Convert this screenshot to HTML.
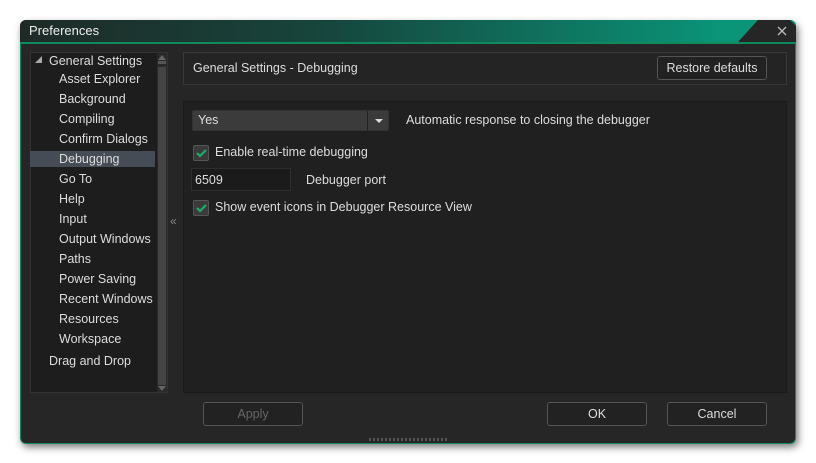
<!DOCTYPE html><html><head><style>
body{margin:0;width:816px;height:463px;background:#fff;position:relative;overflow:hidden;font-family:"Liberation Sans",sans-serif;font-size:12.5px;color:#ddd}
.a{position:absolute}
.win{left:20px;top:20px;width:776px;height:423px;background:#262626;border-radius:6px;box-shadow:2px 4px 8px rgba(0,0,0,.55)}
.title{left:20px;top:20px;width:776px;height:22px;border-radius:6px 6px 0 0;background:linear-gradient(90deg,#1f2a27 0%,#16463d 40%,#0a9478 90%)}
.body{left:20px;top:42px;width:774px;height:399px;border:1px solid #0f8a5c;border-top:2px solid #0f8a5c;border-radius:0 0 6px 6px;background:#262626}
.it{position:absolute;left:59px;height:20px;line-height:20px}
.btn{position:absolute;height:22px;border:1px solid #555;border-radius:3px;background:#222;text-align:center;line-height:22px}
.cb{position:absolute;width:14px;height:14px;background:#3a3a3a;border:1px solid #555;border-radius:2px}
</style></head><body>
<div class="a win"></div>
<div class="a title"></div>
<svg class="a" style="left:738px;top:20px" width="58" height="22"><polygon points="20,0 52,0 58,6 58,22 0,22" fill="#262626"/><path d="M40 7l8 8M48 7l-8 8" stroke="#bbb" stroke-width="1.3"/></svg>
<div class="a" style="left:29px;top:23px;color:#eee;font-size:13px">Preferences</div>
<div class="a body"></div>
<div class="a" style="left:30px;top:52px;width:138px;height:341px;background:#1d1d1d;border:1px solid #333;box-sizing:border-box"></div>
<div class="a" style="left:157px;top:53px;width:10px;height:339px;background:#2a2a2a"></div>
<div class="a" style="left:158px;top:67px;width:8px;height:318px;background:#444"></div>
<div class="a" style="left:158px;top:61px;width:8px;height:3px;background:#555"></div>
<div class="a" style="left:158px;top:55px;width:0;height:0;border-left:4px solid transparent;border-right:4px solid transparent;border-bottom:5px solid #666"></div>
<div class="a" style="left:158px;top:386px;width:0;height:0;border-left:4px solid transparent;border-right:4px solid transparent;border-top:5px solid #666"></div>
<div class="a" style="left:30px;top:151px;width:125px;height:16px;background:#464c55"></div>
<div class="a" style="left:35px;top:56px;width:0;height:0;border-left:7px solid transparent;border-bottom:7px solid #aaa"></div>
<div class="it" style="left:49px;top:51px">General Settings</div>
<div class="it" style="top:69px">Asset Explorer</div>
<div class="it" style="top:89px">Background</div>
<div class="it" style="top:109px">Compiling</div>
<div class="it" style="top:129px">Confirm Dialogs</div>
<div class="it" style="top:149px">Debugging</div>
<div class="it" style="top:169px">Go To</div>
<div class="it" style="top:189px">Help</div>
<div class="it" style="top:209px">Input</div>
<div class="it" style="top:229px">Output Windows</div>
<div class="it" style="top:249px">Paths</div>
<div class="it" style="top:269px">Power Saving</div>
<div class="it" style="top:289px">Recent Windows</div>
<div class="it" style="top:309px">Resources</div>
<div class="it" style="top:329px">Workspace</div>
<div class="it" style="left:49px;top:351px">Drag and Drop</div>
<div class="a" style="left:170px;top:214px;color:#888;font-size:12px">«</div>
<div class="a" style="left:183px;top:52px;width:604px;height:33px;border:1px solid #383838;box-sizing:border-box;background:#242424"></div>
<div class="a" style="left:193px;top:61px">General Settings - Debugging</div>
<div class="btn" style="left:657px;top:56px;width:108px;height:22px;border-color:#555">Restore defaults</div>
<div class="a" style="left:183px;top:101px;width:604px;height:292px;border:1px solid #1a1a1a;box-sizing:border-box;background:#202020"></div>
<div class="a" style="left:192px;top:110px;width:197px;height:21px;background:#3b3b3b;border:1px solid #333;border-radius:2px;box-sizing:border-box"></div>
<div class="a" style="left:367px;top:111px;width:1px;height:19px;background:#222"></div>
<div class="a" style="left:375px;top:119px;width:0;height:0;border-left:4px solid transparent;border-right:4px solid transparent;border-top:4px solid #ddd"></div>
<div class="a" style="left:198px;top:113px">Yes</div>
<div class="a" style="left:406px;top:113px">Automatic response to closing the debugger</div>
<div class="cb" style="left:193px;top:145px"></div>
<svg class="a" style="left:193px;top:145px" width="16" height="16"><path d="M4 8l3 3 6-6" stroke="#1dae6a" stroke-width="2.2" fill="none"/></svg>
<div class="a" style="left:215px;top:145px">Enable real-time debugging</div>
<div class="a" style="left:191px;top:168px;width:100px;height:23px;background:#1b1b1b;border:1px solid #2e2e2e;box-sizing:border-box"></div>
<div class="a" style="left:195px;top:173px">6509</div>
<div class="a" style="left:306px;top:173px">Debugger port</div>
<div class="cb" style="left:193px;top:200px"></div>
<svg class="a" style="left:193px;top:200px" width="16" height="16"><path d="M4 8l3 3 6-6" stroke="#1dae6a" stroke-width="2.2" fill="none"/></svg>
<div class="a" style="left:215px;top:200px">Show event icons in Debugger Resource View</div>
<div class="btn" style="left:203px;top:402px;width:98px;color:#666">Apply</div>
<div class="btn" style="left:547px;top:402px;width:98px">OK</div>
<div class="btn" style="left:667px;top:402px;width:98px">Cancel</div>
<div class="a" style="left:369px;top:438px;width:78px;height:3px;background:repeating-linear-gradient(90deg,#555 0 2px,transparent 2px 4px)"></div>
</body></html>
